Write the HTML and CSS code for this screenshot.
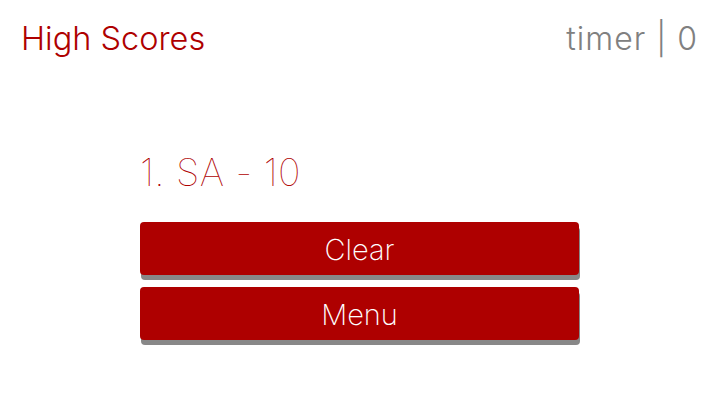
FILE: index.html
```html
<!DOCTYPE html>
<html lang="en">
<head>
<meta charset="utf-8">
<title>High Scores</title>
<link rel="stylesheet" href="styles.css">
</head>
<body>
<header class="top">
  <h1 class="title">High Scores</h1>
  <div class="timer">timer | 0</div>
</header>
<main class="board">
  <ol class="scores">
    <li class="score">1. SA - 10</li>
  </ol>
  <div class="actions">
    <button class="btn">Clear</button>
    <button class="btn">Menu</button>
  </div>
</main>
</body>
</html>
```
FILE: styles.css
```css
* { box-sizing: border-box; }
body {
  margin: 0;
  font-family: "Inter", "Lato", sans-serif;
  font-weight: 300;
  background: #fff;
}
.top {
  display: flex;
  justify-content: space-between;
  align-items: center;
  padding: 18px 24px 0 21px;
  height: 60px;
}
.title {
  margin: 0;
  font-size: 32.5px;
  font-weight: 300;
  color: #ae0000;
  line-height: 40px;
}
.timer {
  font-size: 32px;
  color: #808080;
  line-height: 40px;
  letter-spacing: 1px;
}
.board {
  width: 439px;
  margin-left: 140px;
  padding-top: 90px;
}
.scores {
  list-style: none;
  margin: 0;
  padding: 0;
}
.score {
  font-size: 38px;
  font-weight: 100;
  color: #ae0000;
  line-height: 44px;
  letter-spacing: 0.4px;
}
.actions {
  display: flex;
  flex-direction: column;
  gap: 12px;
  margin-top: 28px;
  padding-bottom: 10px;
}
.btn {
  display: block;
  width: 100%;
  height: 53px;
  border: 0;
  border-radius: 4px;
  background: #ae0000;
  color: #fff;
  font-family: inherit;
  font-weight: 200;
  font-size: 29px;
  padding-top: 2px;
  box-shadow: 1px 5px 0 #888;
  cursor: pointer;
}
```
